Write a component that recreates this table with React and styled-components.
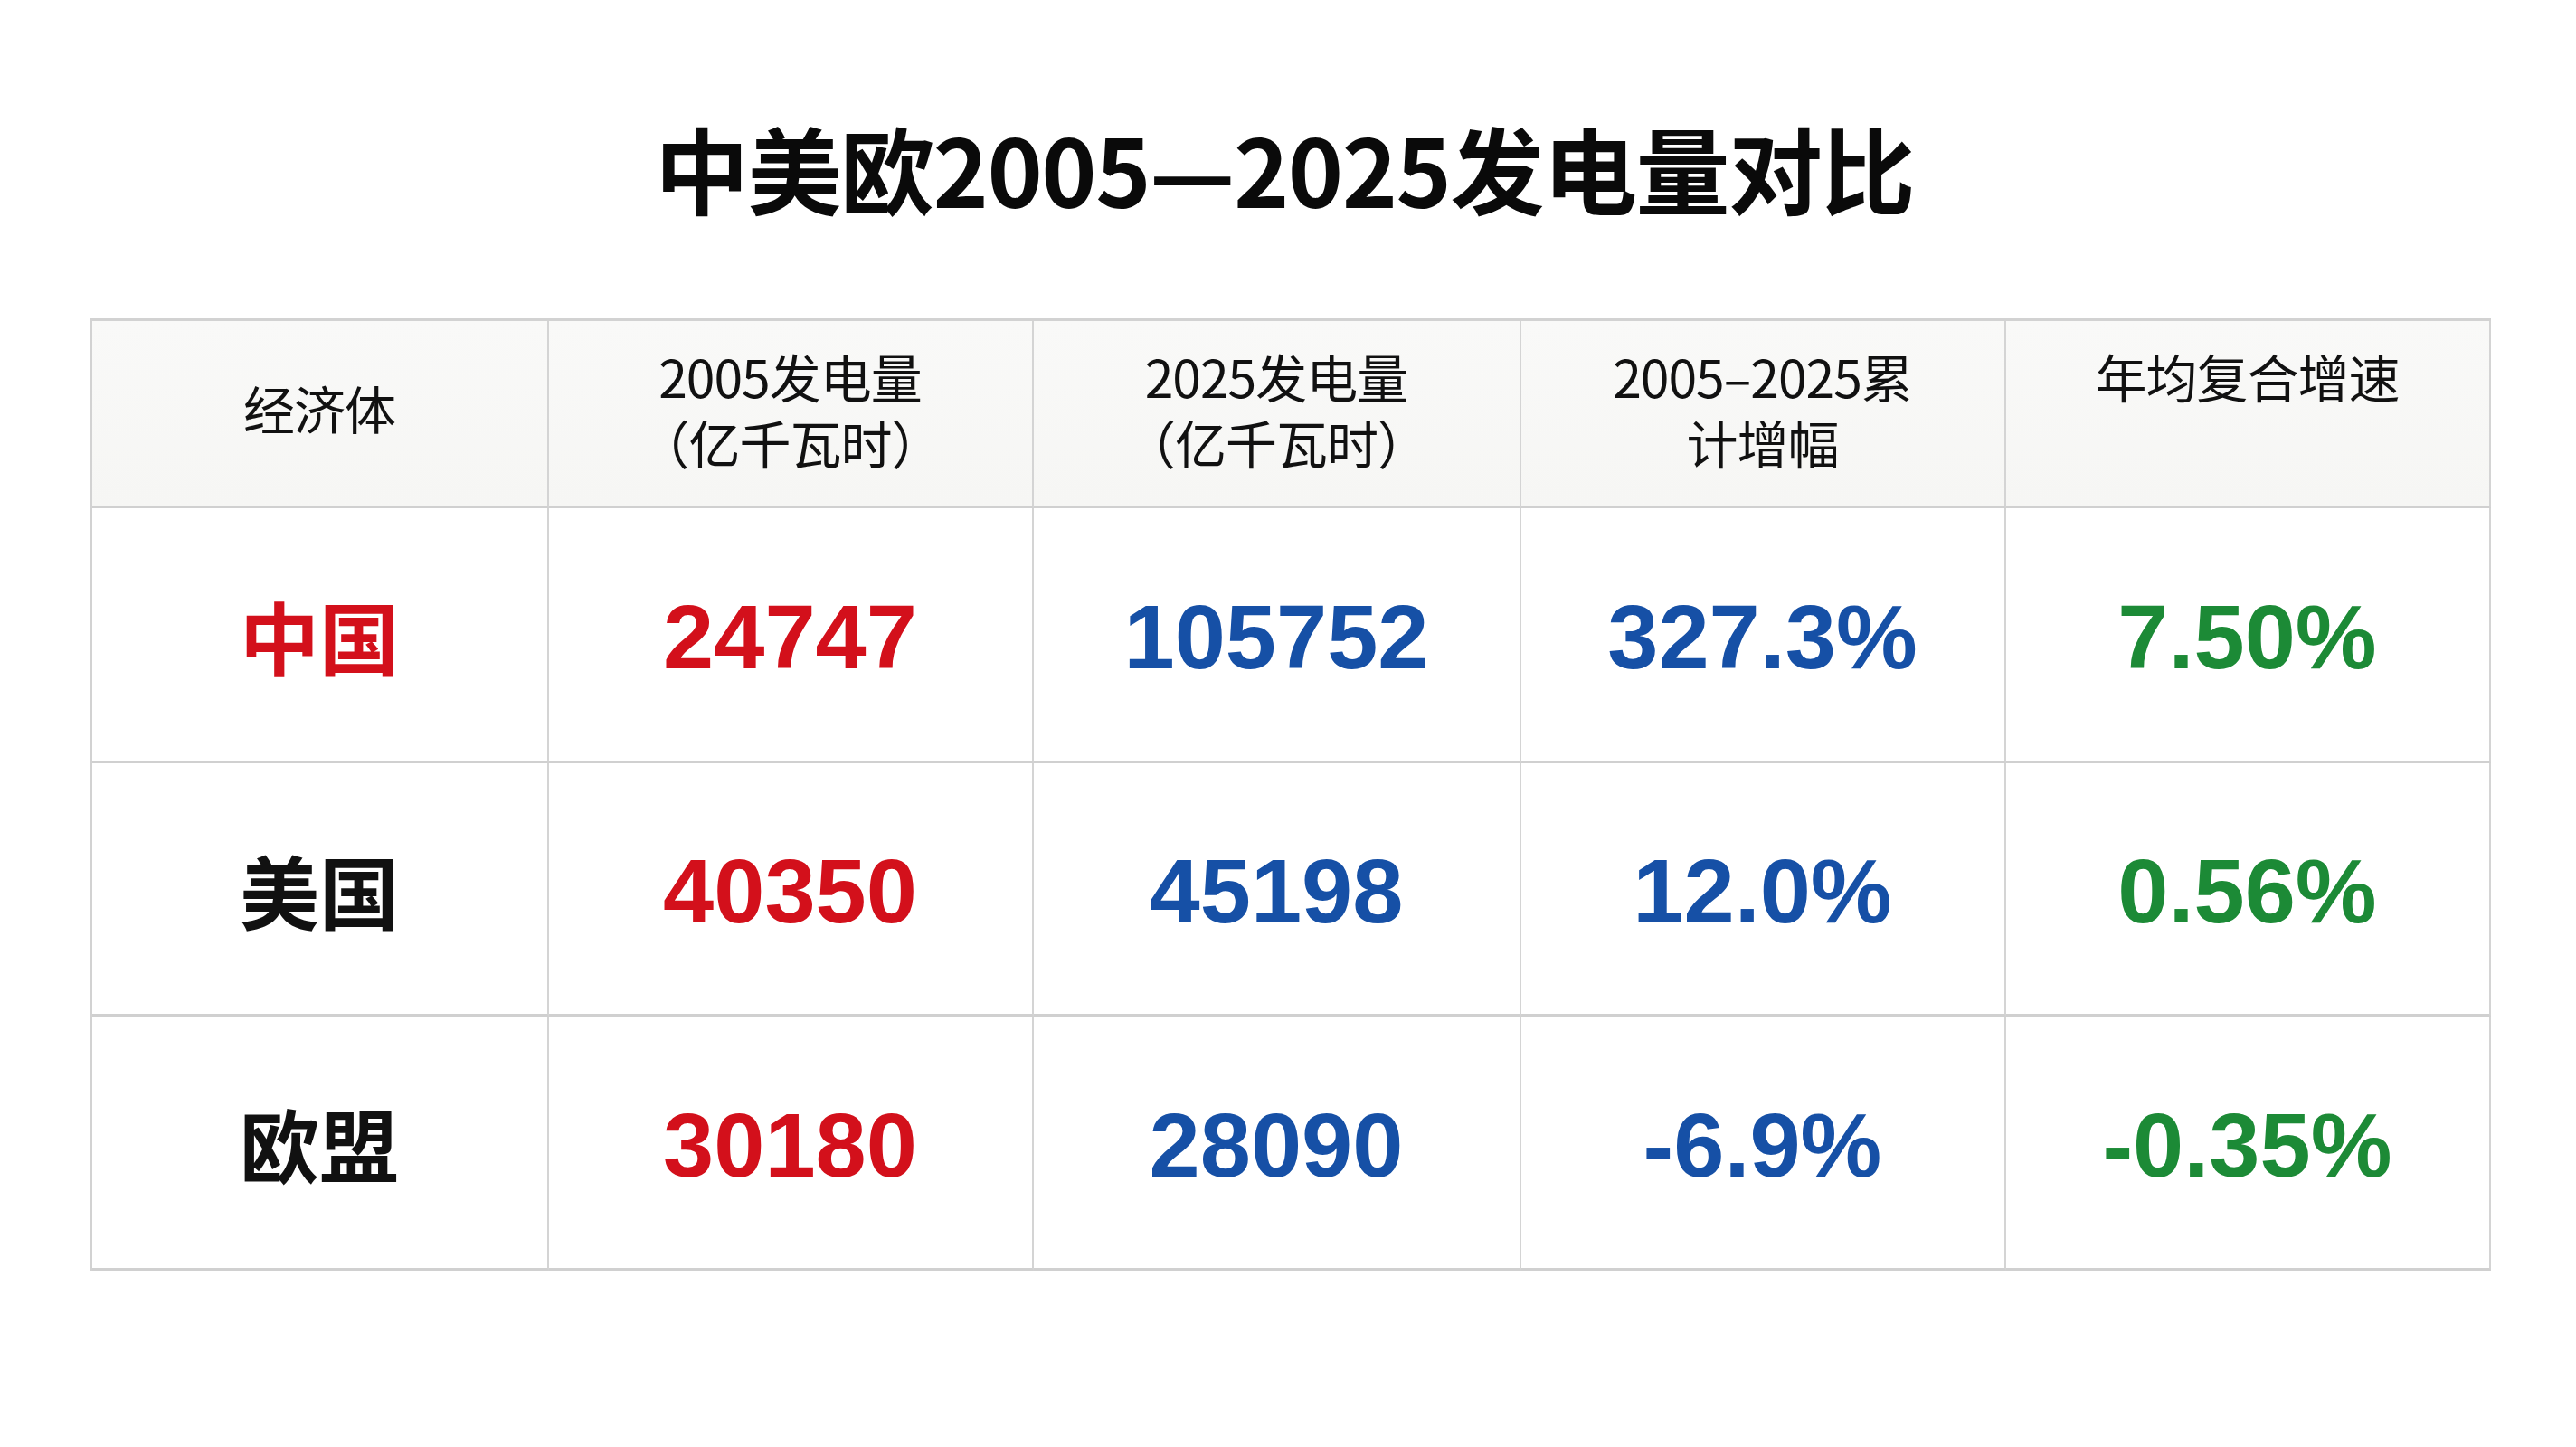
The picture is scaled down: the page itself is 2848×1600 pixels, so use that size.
import React from 'react'
import styled, { createGlobalStyle } from 'styled-components'

const GlobalStyle = createGlobalStyle`
    html, body {
        margin: 0;
        padding: 0;
        background: #ffffff;
    }
    * {
        box-sizing: border-box;
    }
`;

const cjk = `"Noto Sans CJK SC", "Noto Sans", sans-serif`;
const num = `"Liberation Sans", Arial, "Noto Sans CJK SC", sans-serif`;

const colors = {
    red: '#d3101b',
    blue: '#1650a6',
    green: '#1c8a36',
    black: '#111111',
};

const headers = [
    { lines: ['经济体'], middle: true },
    { lines: ['2005发电量', '（亿千瓦时）'] },
    { lines: ['2025发电量', '（亿千瓦时）'] },
    { lines: ['2005–2025累', '计增幅'] },
    { lines: ['年均复合增速'] },
];

const rows = [
    { name: '中国', nameColor: 'red', values: ['24747', '105752', '327.3%', '7.50%'] },
    { name: '美国', nameColor: 'black', values: ['40350', '45198', '12.0%', '0.56%'] },
    { name: '欧盟', nameColor: 'black', values: ['30180', '28090', '-6.9%', '-0.35%'] },
];

const valueColors = ['red', 'blue', 'blue', 'green'];

export default function App () {
    return (
        <Page>
            <GlobalStyle />
            <Title>中美欧2005—2025发电量对比</Title>

            <Table>
                {headers.map((h, i) => (
                    <HeadCell key={i} $middle={h.middle}>
                        {h.lines.map((line, j) => (
                            <HeadLine key={j}>{line}</HeadLine>
                        ))}
                    </HeadCell>
                ))}

                {rows.map((row) => (
                    <React.Fragment key={row.name}>
                        <Cell>
                            <Name $color={colors[row.nameColor]}>{row.name}</Name>
                        </Cell>
                        {row.values.map((v, i) => (
                            <Cell key={i}>
                                <Value $color={colors[valueColors[i]]}>{v}</Value>
                            </Cell>
                        ))}
                    </React.Fragment>
                ))}
            </Table>
        </Page>
    );
}


const Page = styled.main `
    width: 2848px;
    height: 1600px;
    background: #ffffff;
    display: flex;
    flex-direction: column;
    align-items: center;
    padding-top: 123px;
    overflow: hidden;
`;

const Title = styled.h1 `
    margin: 0 0 0 -8px;
    font-family: ${cjk};
    font-weight: 700;
    font-size: 104px;
    line-height: 124px;
    color: #0a0a0a;
    letter-spacing: -1.5px;
`;

const Table = styled.section `
    margin-top: 105px;
    display: grid;
    grid-template-columns: 505px 536px 539px 536px 536px;
    grid-template-rows: 207px 282px 280px 281px;
    border-top: 3px solid #d2d2d2;
    border-left: 3px solid #d2d2d2;
    margin-left: 4px;
`;

const HeadCell = styled.div `
    display: flex;
    flex-direction: column;
    align-items: center;
    justify-content: ${p => p.$middle ? 'center' : 'flex-start'};
    padding-top: ${p => p.$middle ? '0' : '24px'};
    padding-bottom: ${p => p.$middle ? '14px' : '0'};
    background: linear-gradient(180deg, #f9f9f8 0%, #f6f6f4 100%);
    border-right: 2px solid #d4d4d4;
    border-bottom: 3px solid #d0d0d0;
`;

const HeadLine = styled.div `
    font-family: ${cjk};
    font-weight: 400;
    font-size: 57px;
    line-height: 73px;
    color: #111111;
    white-space: nowrap;
    letter-spacing: -1px;
`;

const Cell = styled.div `
    display: flex;
    align-items: center;
    justify-content: center;
    background: #ffffff;
    border-right: 2px solid #d4d4d4;
    border-bottom: 3px solid #d0d0d0;
`;

const Name = styled.div `
    font-family: ${cjk};
    font-weight: 700;
    font-size: 88px;
    line-height: 1;
    color: ${p => p.$color};
`;

const Value = styled.div `
    font-family: ${num};
    font-weight: 700;
    font-size: 101px;
    line-height: 1;
    color: ${p => p.$color};
    padding-top: 6px;
`;
